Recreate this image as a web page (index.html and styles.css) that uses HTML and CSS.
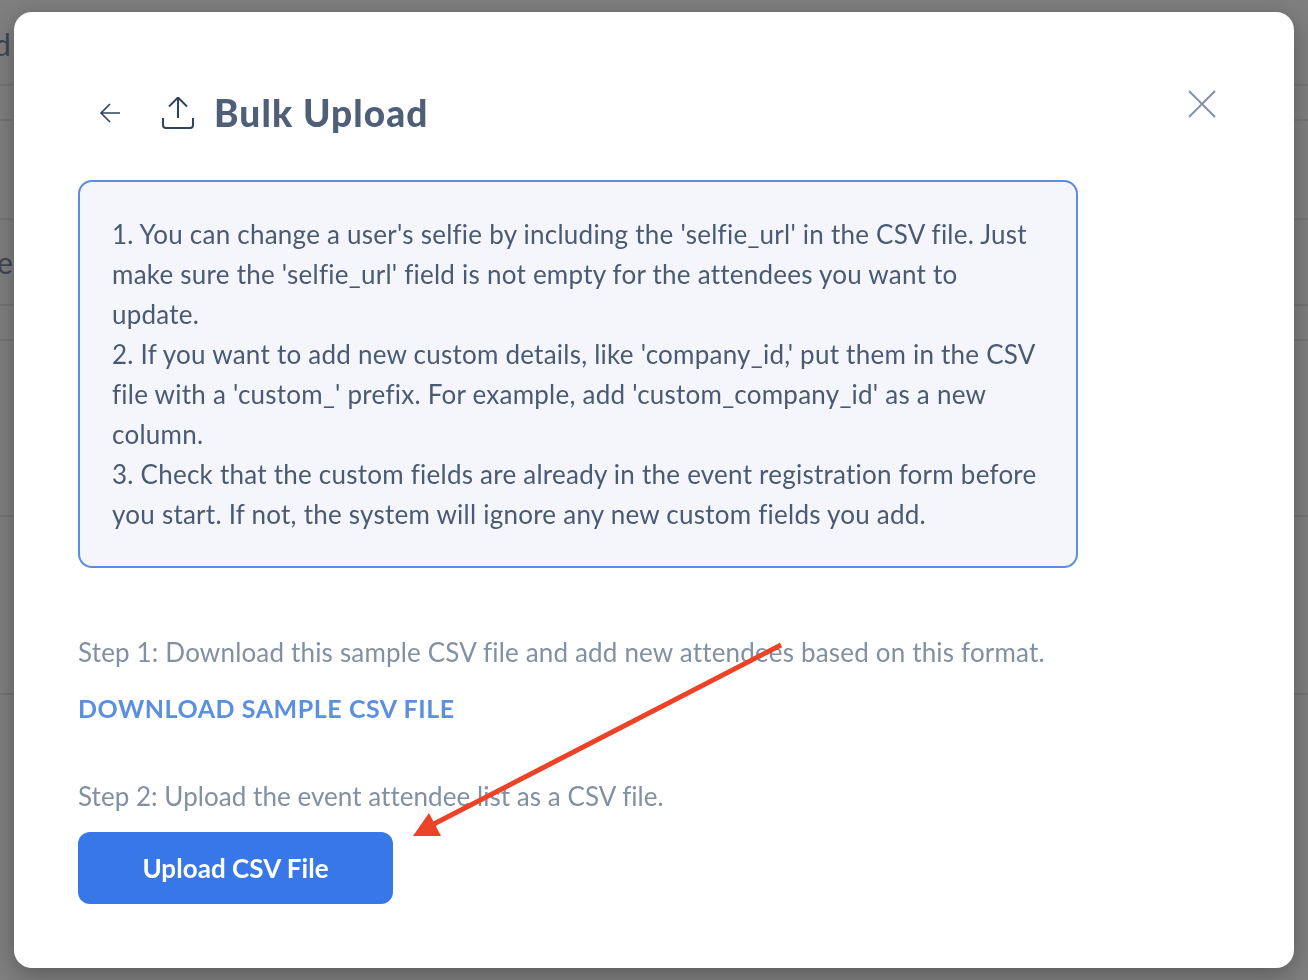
FILE: index.html
```html
<!DOCTYPE html>
<html lang="en">
<head>
  <meta charset="UTF-8" />
  <title>Bulk Upload</title>
  <link rel="stylesheet" href="styles.css">
</head>
<body>
  <!-- page behind the dialog -->
  <div class="backdrop">
    <div class="bg-row bg-row-top"><span class="bg-letter-d">d</span></div>
    <div class="bg-row bg-row-thin"></div>
    <div class="bg-row bg-row-mid"></div>
    <div class="bg-row bg-row-e"><span class="bg-letter-e">e</span></div>
    <div class="bg-row bg-row-thin"></div>
    <div class="bg-row bg-row-big"></div>
    <div class="bg-row bg-row-last"></div>
  </div>

  <div class="modal" role="dialog" aria-labelledby="modalTitle">
    <button class="close-button" aria-label="Close">
      <svg width="28" height="28" viewBox="0 0 28 28"><path d="M1 1L27 27M27 1L1 27" /></svg>
    </button>

    <div class="modal-header">
      <svg class="back-icon" width="22" height="20" viewBox="0 1 22 20"><path d="M21 11H2M11 2L2 11L11 20" /></svg>
      <svg class="upload-icon" width="32" height="32" viewBox="0 1 32 32"><path d="M16 22V2M7 10.500L16 1.500L25 10.500M1 22V29C1 31 2 32 4 32H28C30 32 31 31 31 29V22" /></svg>
      <h2 id="modalTitle">Bulk Upload</h2>
    </div>

    <div class="info-box">
      <p>1. You can change a user's selfie by including the 'selfie_url' in the CSV file. Just make sure the 'selfie_url' field is not empty for the attendees you want to update.</p>
      <p>2. If you want to add new custom details, like 'company_id,' put them in the CSV file with a 'custom_' prefix. For example, add 'custom_company_id' as a new column.</p>
      <p>3. Check that the custom fields are already in the event registration form before you start. If not, the system will ignore any new custom fields you add.</p>
    </div>

    <p class="step-text step-one">Step 1: Download this sample CSV file and add new attendees based on this format.</p>
    <a class="download-link" href="#">DOWNLOAD SAMPLE CSV FILE</a>
    <p class="step-text step-two">Step 2: Upload the event attendee list as a CSV file.</p>
    <button class="upload-button">Upload CSV File</button>
  </div>

  <!-- annotation drawn on top of the screenshot -->
  <svg class="arrow" width="1308" height="980" viewBox="0 0 1308 980">
    <line x1="781" y1="645" x2="428" y2="827" />
    <polygon points="429,813 441,836 413,836" />
  </svg>
</body>
</html>
```

FILE: styles.css
```css
* { box-sizing: border-box; }

html, body {
  margin: 0; padding: 0;
  height: 980px;
  overflow: hidden;
  background: #7f7f7f;
  font-family: "Lato", "Noto Sans", sans-serif;
  font-variant-ligatures: none;
}

.backdrop { height: 100%; }

.bg-row {
  border-bottom: 2px solid #757575;
  color: #3f4652;
  font-size: 30px;
  line-height: 1;
}
.bg-row-top { height: 86px; padding-top: 29px; margin-left: -6px; }
.bg-row-thin { height: 35px; }
.bg-row-mid { height: 99px; }
.bg-row-e { height: 86px; padding-top: 27px; margin-left: -3px; }
.bg-row-big { height: 176px; }
.bg-row-last { height: 178px; }

.modal {
  position: fixed;
  left: 14px; top: 12px;
  width: 1280px; height: 956px;
  background: #fff;
  border-radius: 18px;
  box-shadow: 0 6px 24px rgba(0,0,0,0.3);
  padding: 77px 64px 0;
  display: flex; flex-direction: column; align-items: flex-start;
}

.close-button {
  position: absolute;
  top: 78px; right: 78px;
  padding: 0; border: none; background: none;
  line-height: 0;
  cursor: pointer;
}
.close-button path { fill: none; stroke: #8492a6; stroke-width: 2; }

.modal-header {
  display: flex; align-items: center;
  height: 48px;
  padding-left: 21px;
  margin-bottom: 43px;
}
.back-icon { margin-right: 41px; }
.back-icon path { fill: none; stroke: #2f4363; stroke-width: 1.600; }
.upload-icon { margin-right: 20px; }
.upload-icon path { fill: none; stroke: #2f4363; stroke-width: 2; }

.modal-header h2 {
  margin: -2px 0 0;
  font-size: 37px; font-weight: 900;
  letter-spacing: 1.100px;
  color: #4f5f78;
}

.info-box {
  width: 1000px; height: 388px;
  background: #f4f6fb;
  border: 2px solid #5b8dde;
  border-radius: 14px;
  padding: 32px 32px;
  font-size: 26px; line-height: 40px;
  letter-spacing: 0.240px;
  color: #4a5a73;
}
.info-box p { margin: 0; }

.step-text {
  margin: 0;
  font-size: 26px; line-height: 40px;
  color: #8290a3;
}
.step-one { margin-top: 64px; letter-spacing: 0.175px; }
.step-two { margin-top: 48px; letter-spacing: 0.050px; }

.download-link {
  margin-top: 16px;
  font-size: 25px; line-height: 40px; font-weight: 700;
  letter-spacing: 0.550px;
  color: #5b8fe0;
  text-decoration: none;
}

.upload-button {
  margin-top: 16px;
  width: 315px; height: 72px;
  background: #3777e8;
  border: none; border-radius: 12px;
  font-family: inherit;
  font-size: 26px; font-weight: 700;
  letter-spacing: 0.050px;
  color: #fff;
  cursor: pointer;
}

.arrow {
  position: fixed; left: 0; top: 0;
  pointer-events: none;
}
.arrow line { stroke: #ec4226; stroke-width: 5; }
.arrow polygon { fill: #ec4226; }
```
